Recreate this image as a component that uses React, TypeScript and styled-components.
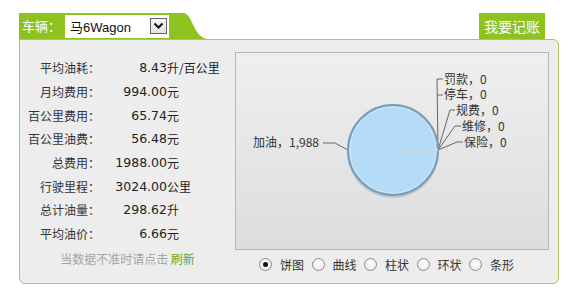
import styled, { createGlobalStyle } from 'styled-components'

const GlobalStyle = createGlobalStyle`
  html, body {
    margin: 0;
    padding: 0;
    background: #ffffff;
  }
  body {
    font-family: "Noto Sans CJK SC", "Noto Sans", sans-serif;
  }
`

const GREEN = '#8dc21f'
const BORDER = '#acc75a'

const Wrapper = styled.div`
  width: 540px;
  padding: 13px 0 0 19px;
`

const Header = styled.div`
  display: flex;
  justify-content: space-between;
  align-items: flex-end;
  height: 26px;
`

const Tab = styled.div`
  display: flex;
  align-items: stretch;
  height: 26px;
`

const TabBody = styled.div`
  display: flex;
  align-items: center;
  gap: 4px;
  width: 159px;
  padding-left: 3px;
  background: ${GREEN};
`

const TabEdge = styled.div`
  width: 28px;
  height: 26px;
  background: ${GREEN};
  clip-path: path('M0 0 L2 0 C12 0 12 26 28 26 L0 26 Z');
`

const TabLabel = styled.span`
  color: #ffffff;
  font-size: 13px;
  line-height: 26px;
  white-space: nowrap;
`

const Select = styled.div`
  display: flex;
  align-items: center;
  justify-content: space-between;
  width: 104px;
  height: 23px;
  box-sizing: border-box;
  padding: 0 2px 0 5px;
  background: #ffffff;
  font-family: "Liberation Sans", "Noto Sans CJK SC", sans-serif;
  font-size: 13px;
  color: #111;
`

const SelectArrow = styled.span`
  display: flex;
  align-items: center;
  justify-content: center;
  width: 17px;
  height: 16px;
  box-sizing: border-box;
  border: 1px solid #666;
  background: linear-gradient(#f6f6f6, #e2e2e2);
`

const RecordButton = styled.div`
  width: 66px;
  height: 26px;
  margin-right: 14px;
  background: ${GREEN};
  color: #ffffff;
  font-size: 14px;
  line-height: 26px;
  text-align: center;
`

const Panel = styled.div`
  display: flex;
  width: 540px;
  height: 245px;
  box-sizing: border-box;
  border: 1px solid ${BORDER};
  border-radius: 0 6px 6px 6px;
  background: #ededed;
`

const Stats = styled.div`
  width: 215px;
  padding-top: 16px;
  display: flex;
  flex-direction: column;
`

const StatRow = styled.div`
  display: grid;
  grid-template-columns: 80px 67px auto;
  height: 23.7px;
  align-items: center;
  font-size: 12px;
  color: #333;
  white-space: nowrap;
`

const StatLabel = styled.span`
  text-align: right;
`

const StatNumber = styled.span`
  text-align: right;
  font-family: "DejaVu Sans", sans-serif;
  font-size: 12.5px;
  color: #222;
`

const StatUnit = styled.span`
  color: #222;
`

const Refresh = styled.div`
  margin-top: 1px;
  text-align: center;
  font-size: 12px;
  line-height: 24px;
  color: #a5a5a5;
`

const RefreshLink = styled.span`
  color: #6aa31c;
`

const ChartColumn = styled.div`
  display: flex;
  flex-direction: column;
  padding-top: 12px;
`

const ChartBox = styled.div`
  width: 314px;
  height: 198px;
  box-sizing: border-box;
  border: 1px solid #b6b6b6;
  background: linear-gradient(#efefef, #dddddd);
`

const RadioRow = styled.div`
  display: flex;
  align-items: center;
  height: 28px;
  padding-left: 24px;
`

const RadioItem = styled.label`
  display: flex;
  align-items: center;
  gap: 8px;
  margin-right: 7.5px;
  font-size: 12px;
  color: #333;
`

const RadioDot = styled.span<{ $checked: boolean }>`
  display: flex;
  align-items: center;
  justify-content: center;
  width: 13px;
  height: 13px;
  box-sizing: border-box;
  border: 1px solid #8c8c8c;
  border-radius: 50%;
  background: radial-gradient(circle at 50% 40%, #ffffff, #e4e4e4);

  &::after {
    content: '';
    display: ${({ $checked }) => ($checked ? 'block' : 'none')};
    width: 5px;
    height: 5px;
    border-radius: 50%;
    background: #111;
  }
`

const stats = [
  { label: '平均油耗：', num: '8.43', unit: '升/百公里' },
  { label: '月均费用：', num: '994.00', unit: '元' },
  { label: '百公里费用：', num: '65.74', unit: '元' },
  { label: '百公里油费：', num: '56.48', unit: '元' },
  { label: '总费用：', num: '1988.00', unit: '元' },
  { label: '行驶里程：', num: '3024.00', unit: '公里' },
  { label: '总计油量：', num: '298.62', unit: '升' },
  { label: '平均油价：', num: '6.66', unit: '元' }
]

const chartTypes = ['饼图', '曲线', '柱状', '环状', '条形']

// label position + leader line (chart box coords)
const rightLabels = [
  { text: '罚款，0', x: 208, y: 31, line: '202,97 201,26 207,26' },
  { text: '停车，0', x: 208, y: 46, line: '201,42 207,42' },
  { text: '规费，0', x: 220, y: 62, line: '202,97 214,57 219,57' },
  { text: '维修，0', x: 226, y: 78, line: '202,97 219,73 225,73' },
  { text: '保险，0', x: 228, y: 94, line: '202,97 221,89 227,89' }
]

function PieChart() {
  return (
    <svg width="312" height="196" viewBox="0 0 312 196">
      <g fill="none" stroke="#666" strokeWidth="1">
        <polyline points="87,90 99,90 112,97" />
        {rightLabels.map((l) => (
          <polyline key={l.text} points={l.line} />
        ))}
      </g>
      <circle cx="157" cy="99" r="46" fill="#000" opacity="0.12" />
      <circle cx="157" cy="97" r="45" fill="#b4dcf8" stroke="#7d9db3" strokeWidth="2" />
      <circle cx="157" cy="97" r="43" fill="none" stroke="#cfe9fb" strokeWidth="1" opacity="0.8" />
      <line x1="157" y1="97" x2="202" y2="97" stroke="#d2d8dd" strokeWidth="1.5" />
      <g fontFamily='"Noto Sans CJK SC", sans-serif' fontSize="12" fill="#333">
        <text x="83" y="94" textAnchor="end">加油，1,988</text>
        {rightLabels.map((l) => (
          <text key={l.text} x={l.x} y={l.y}>
            {l.text}
          </text>
        ))}
      </g>
    </svg>
  )
}

export default function App() {
  return (
    <Wrapper>
      <GlobalStyle />
      <Header>
        <Tab>
          <TabBody>
            <TabLabel>车辆：</TabLabel>
            <Select>
              <span>马6Wagon</span>
              <SelectArrow>
                <svg width="11" height="8" viewBox="0 0 11 8">
                  <polyline points="1.5,1.5 5.5,5.5 9.5,1.5" fill="none" stroke="#111" strokeWidth="2" />
                </svg>
              </SelectArrow>
            </Select>
          </TabBody>
          <TabEdge />
        </Tab>
        <RecordButton>我要记账</RecordButton>
      </Header>
      <Panel>
        <Stats>
          {stats.map((s) => (
            <StatRow key={s.label}>
              <StatLabel>{s.label}</StatLabel>
              <StatNumber>{s.num}</StatNumber>
              <StatUnit>{s.unit}</StatUnit>
            </StatRow>
          ))}
          <Refresh>
            当数据不准时请点击 <RefreshLink>刷新</RefreshLink>
          </Refresh>
        </Stats>
        <ChartColumn>
          <ChartBox>
            <PieChart />
          </ChartBox>
          <RadioRow>
            {chartTypes.map((t, i) => (
              <RadioItem key={t}>
                <RadioDot $checked={i === 0} />
                {t}
              </RadioItem>
            ))}
          </RadioRow>
        </ChartColumn>
      </Panel>
    </Wrapper>
  )
}
